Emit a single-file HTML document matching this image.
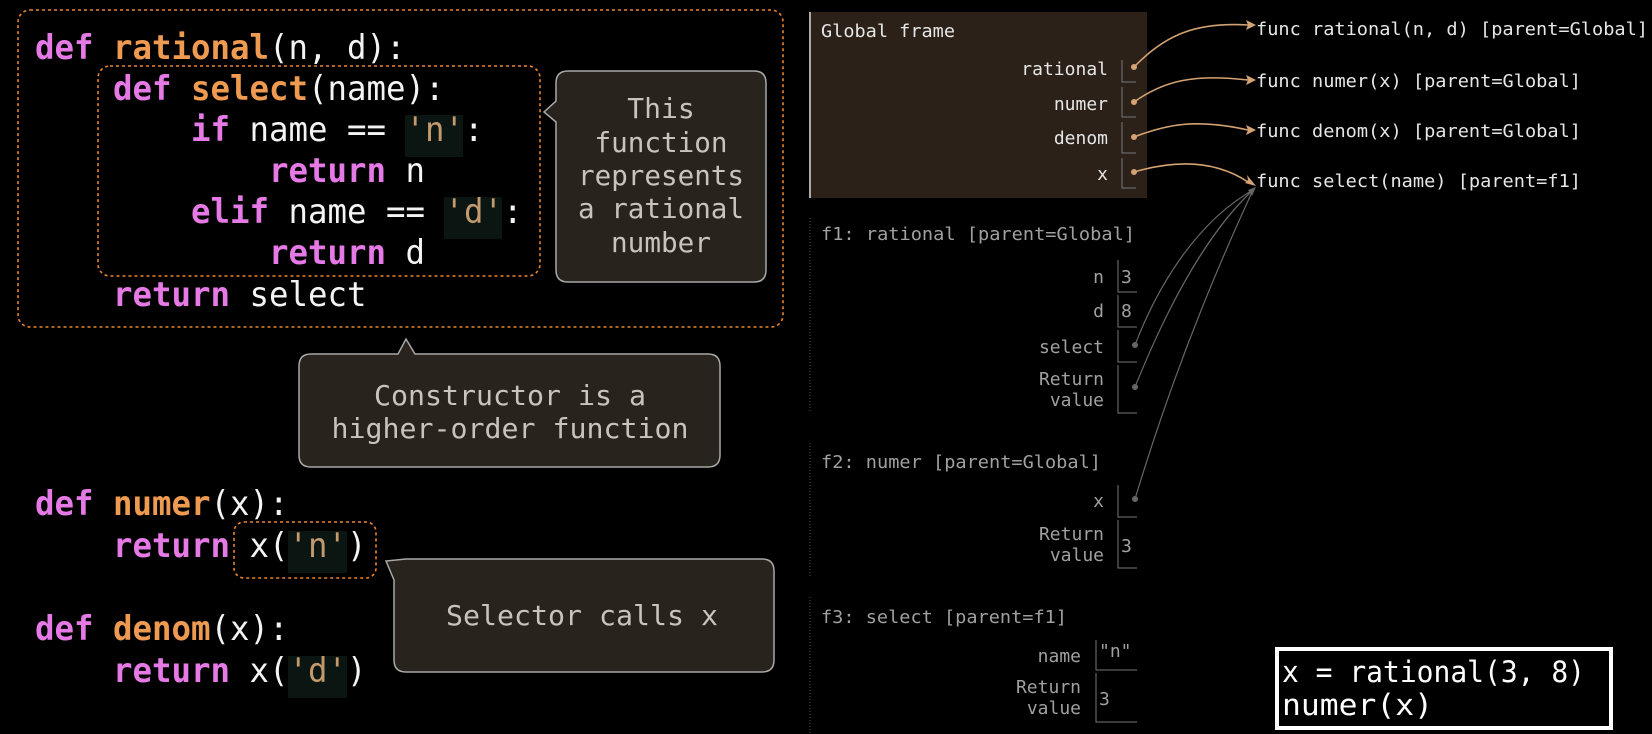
<!DOCTYPE html>
<html><head><meta charset="utf-8"><style>
html,body{margin:0;padding:0;background:#000;width:1652px;height:734px;overflow:hidden}
svg{display:block}
.c{font-family:"DejaVu Sans Mono","Liberation Mono",monospace;font-size:34px}
.k{fill:#e57ae6;font-weight:bold}
.f{fill:#ee9a50;font-weight:bold}
.w{fill:#f4f4f4}
.s{fill:#c39a6e}
.tt{font-family:"DejaVu Sans Mono","Liberation Mono",monospace;font-size:28px;fill:#c8c4bc}
.r{font-family:"DejaVu Sans Mono","Liberation Mono",monospace;font-size:18px}
.g{fill:#e6e6e6}
.d{fill:#a0a0a0}
</style></head><body>
<svg width="1652" height="734" viewBox="0 0 1652 734" xmlns="http://www.w3.org/2000/svg">
<rect width="1652" height="734" fill="#000"/>
<rect x="18" y="10" width="765" height="317" rx="12" fill="none" stroke="#e8842e" stroke-width="1.6" stroke-dasharray="3,3"/>
<rect x="98" y="66" width="442" height="210" rx="12" fill="none" stroke="#e8842e" stroke-width="1.6" stroke-dasharray="3,3"/>
<rect x="234" y="522" width="142" height="56" rx="10" fill="none" stroke="#e8842e" stroke-width="1.6" stroke-dasharray="3,3"/>
<rect x="405" y="115" width="58" height="42" fill="#0b1613"/>
<rect x="444" y="197" width="58" height="42" fill="#0b1613"/>
<rect x="288" y="531" width="59" height="42" fill="#0b1613"/>
<rect x="288" y="656" width="59" height="42" fill="#0b1613"/>
<g class="c">
<text x="35" y="59" class="k" textLength="58.5" lengthAdjust="spacingAndGlyphs">def</text>
<text x="113" y="59" class="f" textLength="156" lengthAdjust="spacingAndGlyphs">rational</text>
<text x="269" y="59" class="w" textLength="136.5" lengthAdjust="spacingAndGlyphs">(n, d):</text>
<text x="113" y="100" class="k" textLength="58.5" lengthAdjust="spacingAndGlyphs">def</text>
<text x="191" y="100" class="f" textLength="117" lengthAdjust="spacingAndGlyphs">select</text>
<text x="308" y="100" class="w" textLength="136.5" lengthAdjust="spacingAndGlyphs">(name):</text>
<text x="191" y="141" class="k" textLength="39" lengthAdjust="spacingAndGlyphs">if</text>
<text x="249.5" y="141" class="w" textLength="136.5" lengthAdjust="spacingAndGlyphs">name ==</text>
<text x="405.5" y="141" class="s" textLength="58.5" lengthAdjust="spacingAndGlyphs">'n'</text>
<text x="464" y="141" class="w" textLength="19.5" lengthAdjust="spacingAndGlyphs">:</text>
<text x="269" y="182" class="k" textLength="117" lengthAdjust="spacingAndGlyphs">return</text>
<text x="405.5" y="182" class="w" textLength="19.5" lengthAdjust="spacingAndGlyphs">n</text>
<text x="191" y="223" class="k" textLength="78" lengthAdjust="spacingAndGlyphs">elif</text>
<text x="288.5" y="223" class="w" textLength="136.5" lengthAdjust="spacingAndGlyphs">name ==</text>
<text x="444.5" y="223" class="s" textLength="58.5" lengthAdjust="spacingAndGlyphs">'d'</text>
<text x="503" y="223" class="w" textLength="19.5" lengthAdjust="spacingAndGlyphs">:</text>
<text x="269" y="264" class="k" textLength="117" lengthAdjust="spacingAndGlyphs">return</text>
<text x="405.5" y="264" class="w" textLength="19.5" lengthAdjust="spacingAndGlyphs">d</text>
<text x="113" y="306" class="k" textLength="117" lengthAdjust="spacingAndGlyphs">return</text>
<text x="249.5" y="306" class="w" textLength="117" lengthAdjust="spacingAndGlyphs">select</text>
<text x="35" y="515" class="k" textLength="58.5" lengthAdjust="spacingAndGlyphs">def</text>
<text x="113" y="515" class="f" textLength="97.5" lengthAdjust="spacingAndGlyphs">numer</text>
<text x="210.5" y="515" class="w" textLength="78" lengthAdjust="spacingAndGlyphs">(x):</text>
<text x="113" y="557" class="k" textLength="117" lengthAdjust="spacingAndGlyphs">return</text>
<text x="249.5" y="557" class="w" textLength="39" lengthAdjust="spacingAndGlyphs">x(</text>
<text x="288.5" y="557" class="s" textLength="58.5" lengthAdjust="spacingAndGlyphs">'n'</text>
<text x="347" y="557" class="w" textLength="19.5" lengthAdjust="spacingAndGlyphs">)</text>
<text x="35" y="640" class="k" textLength="58.5" lengthAdjust="spacingAndGlyphs">def</text>
<text x="113" y="640" class="f" textLength="97.5" lengthAdjust="spacingAndGlyphs">denom</text>
<text x="210.5" y="640" class="w" textLength="78" lengthAdjust="spacingAndGlyphs">(x):</text>
<text x="113" y="682" class="k" textLength="117" lengthAdjust="spacingAndGlyphs">return</text>
<text x="249.5" y="682" class="w" textLength="39" lengthAdjust="spacingAndGlyphs">x(</text>
<text x="288.5" y="682" class="s" textLength="58.5" lengthAdjust="spacingAndGlyphs">'d'</text>
<text x="347" y="682" class="w" textLength="19.5" lengthAdjust="spacingAndGlyphs">)</text>
</g>
<path d="M568 71 H754 Q766 71 766 83 V270 Q766 282 754 282 H568 Q556 282 556 270 V122 L544 112 L556 101 V83 Q556 71 568 71 Z" fill="#29231d" stroke="#a8a8a8" stroke-width="1.5"/>
<g class="tt" text-anchor="middle">
<text x="661" y="118">This</text>
<text x="661" y="152" textLength="133" lengthAdjust="spacingAndGlyphs">function</text>
<text x="661" y="185" textLength="166" lengthAdjust="spacingAndGlyphs">represents</text>
<text x="661" y="218" textLength="166" lengthAdjust="spacingAndGlyphs">a rational</text>
<text x="661" y="252" textLength="100" lengthAdjust="spacingAndGlyphs">number</text>
</g>
<path d="M311 354 H398 L406 339 L415 354 H708 Q720 354 720 366 V455 Q720 467 708 467 H311 Q299 467 299 455 V366 Q299 354 311 354 Z" fill="#29231d" stroke="#a8a8a8" stroke-width="1.5"/>
<g class="tt" text-anchor="middle">
<text x="510" y="405" textLength="272" lengthAdjust="spacingAndGlyphs">Constructor is a</text>
<text x="510" y="438" textLength="357" lengthAdjust="spacingAndGlyphs">higher-order function</text>
</g>
<path d="M406 559 H762 Q774 559 774 571 V660 Q774 672 762 672 H406 Q394 672 394 660 V580 L386 561 Z" fill="#29231d" stroke="#a8a8a8" stroke-width="1.5"/>
<text x="582" y="625" class="tt" text-anchor="middle" textLength="272" lengthAdjust="spacingAndGlyphs">Selector calls x</text>

<rect x="810" y="12" width="337" height="186" fill="#2b2118"/>
<rect x="809" y="12" width="2" height="186" fill="#aaa"/>
<g class="r">
<text x="821" y="37" class="g" textLength="134" lengthAdjust="spacingAndGlyphs">Global frame</text>
<text x="1108" y="75" class="g" text-anchor="end">rational</text>
<text x="1108" y="110" class="g" text-anchor="end">numer</text>
<text x="1108" y="144" class="g" text-anchor="end">denom</text>
<text x="1108" y="180" class="g" text-anchor="end">x</text>
</g>
<g stroke="#777" stroke-width="1" fill="none">
<path d="M1122 60 V82 H1136 M1122 87 V117 H1136 M1122 122 V153 H1136 M1122 158 V188 H1136"/>
</g>
<g fill="#d4a373">
<circle cx="1134" cy="67" r="3"/><circle cx="1134" cy="102" r="3"/><circle cx="1134" cy="137" r="3"/><circle cx="1134" cy="172" r="3"/>
</g>
<g stroke="#d4a373" stroke-width="1.6" fill="none">
<path d="M1134 67 C1165 35 1195 22 1248 25"/>
<path d="M1134 102 C1165 80 1195 74 1248 80"/>
<path d="M1134 137 C1165 125 1195 118 1248 130"/>
<path d="M1134 172 C1175 160 1215 160 1248 182"/>
</g>
<g fill="#d4a373">
<path d="M1256 25 L1246 20 L1248 25 L1246 30 Z"/>
<path d="M1256 80 L1246 75 L1248 80 L1246 85 Z"/>
<path d="M1256 130 L1246 125 L1248 130 L1246 135 Z"/>
<path d="M1256 186 L1245 183 L1248 180 L1247 175 Z"/>
</g>
<g class="r g">
<text x="1256" y="35" textLength="392" lengthAdjust="spacingAndGlyphs">func rational(n, d) [parent=Global]</text>
<text x="1256" y="87" textLength="325" lengthAdjust="spacingAndGlyphs">func numer(x) [parent=Global]</text>
<text x="1256" y="137" textLength="325" lengthAdjust="spacingAndGlyphs">func denom(x) [parent=Global]</text>
<text x="1256" y="187" textLength="325" lengthAdjust="spacingAndGlyphs">func select(name) [parent=f1]</text>
</g>

<g stroke="#555" stroke-width="1" stroke-dasharray="1,2">
<path d="M810 218 V413 M810 443 V577 M810 597 V734"/>
</g>
<g class="r d">
<text x="821" y="240" textLength="314" lengthAdjust="spacingAndGlyphs">f1: rational [parent=Global]</text>
<text x="1104" y="283" text-anchor="end">n</text>
<text x="1104" y="317" text-anchor="end">d</text>
<text x="1104" y="353" text-anchor="end">select</text>
<text x="1104" y="385" text-anchor="end">Return</text>
<text x="1104" y="406" text-anchor="end">value</text>
<text x="1121" y="283">3</text>
<text x="1121" y="317">8</text>
<text x="821" y="468" textLength="280" lengthAdjust="spacingAndGlyphs">f2: numer [parent=Global]</text>
<text x="1104" y="507" text-anchor="end">x</text>
<text x="1104" y="540" text-anchor="end">Return</text>
<text x="1104" y="561" text-anchor="end">value</text>
<text x="1121" y="552">3</text>
<text x="821" y="623" textLength="246" lengthAdjust="spacingAndGlyphs">f3: select [parent=f1]</text>
<text x="1081" y="662" text-anchor="end">name</text>
<text x="1099" y="657">"n"</text>
<text x="1081" y="693" text-anchor="end">Return</text>
<text x="1081" y="714" text-anchor="end">value</text>
<text x="1099" y="705">3</text>
</g>
<g stroke="#777" stroke-width="1" fill="none">
<path d="M1118 260 V292 H1137 M1118 295 V327 H1137 M1118 330 V362 H1137 M1118 365 V413 H1137"/>
<path d="M1118 485 V517 H1137 M1118 520 V568 H1137"/>
<path d="M1096 640 V670 H1137 M1096 673 V722 H1137"/>
</g>
<g fill="#666"><circle cx="1135" cy="345" r="3"/><circle cx="1135" cy="387" r="3"/><circle cx="1135" cy="499" r="3"/></g>
<g stroke="#666" stroke-width="1.2" fill="none">
<path d="M1135 345 C1160 280 1200 220 1253 190"/>
<path d="M1135 387 C1170 300 1210 230 1253 190"/>
<path d="M1135 499 C1180 350 1230 240 1253 190"/>
</g>
<path d="M1256 187 L1248 190 L1252 196 Z" fill="#666"/>

<rect x="1277" y="649" width="334" height="79" fill="#000" stroke="#fff" stroke-width="4"/>
<g font-family="'DejaVu Sans Mono','Liberation Mono',monospace" font-size="29" fill="#fff">
<text x="1282" y="682" textLength="303" lengthAdjust="spacingAndGlyphs">x = rational(3, 8)</text>
<text x="1282" y="715" textLength="151" lengthAdjust="spacingAndGlyphs">numer(x)</text>
</g>
</svg>
</body></html>
